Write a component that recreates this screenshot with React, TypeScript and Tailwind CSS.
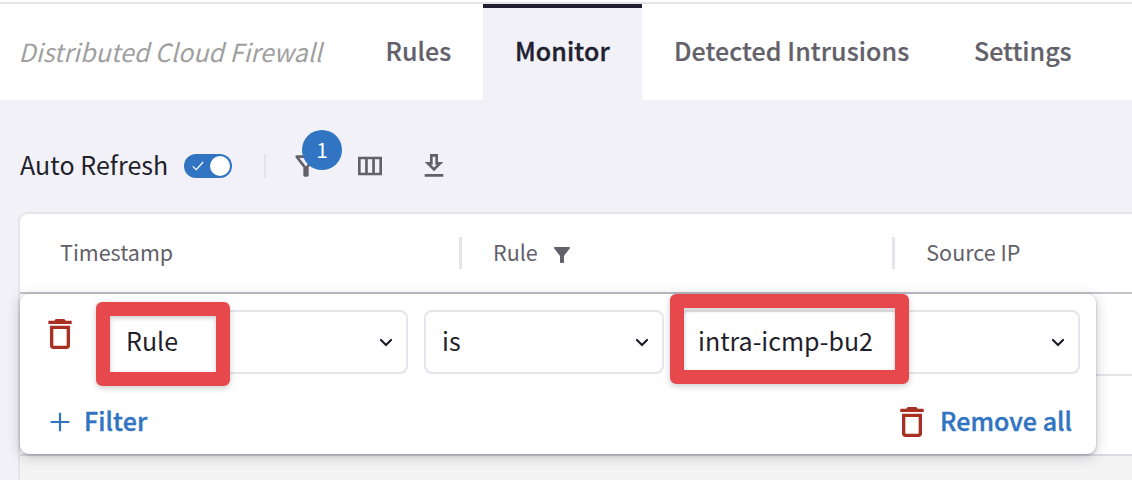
import React from "react";

function Trash() {
  return (
    <svg viewBox="0 0 24 24" className="size-10 shrink-0 fill-[#a92f23]">
      <path d="M16 9v10H8V9h8m-1.5-6h-5l-1 1H5v2h14V4h-3.500l-1-1zM18 7H6v12c0 1.100.9 2 2 2h8c1.100 0 2-.9 2-2V7z" />
    </svg>
  );
}

function Chevron() {
  return (
    <svg viewBox="0 0 24 24" className="size-6 shrink-0 fill-none stroke-[#1f1f2b] stroke-[2.2]">
      <path d="M7 10l5 5 5-5" strokeLinecap="round" strokeLinejoin="miter" />
    </svg>
  );
}

function Select({ label, className }: { label: string; className: string }) {
  return (
    <div className={`flex h-16 items-center justify-between rounded-lg border-2 border-[#e5e4ea] bg-white pr-2 ${className}`}>
      <span className="pb-1">{label}</span>
      <Chevron />
    </div>
  );
}

const FILTER =
  "M4.25 5.61C6.27 8.2 10 13 10 13v6c0 .55.45 1 1 1h2c.55 0 1-.45 1-1v-6s3.720-4.800 5.740-7.390C20.250 4.950 19.780 4 18.950 4H5.040c-.83 0-1.300.950-.79 1.610z";

export default function App() {
  return (
    <div className="h-[480px] w-[1132px] overflow-hidden bg-[#f2f1f7] font-['Noto_Sans_CJK_SC',sans-serif] text-[25px] leading-8 whitespace-nowrap text-[#1f1f2b]">
      <header className="h-[100px] bg-white pt-0.5">
        <div className="flex h-[98px] border-t-2 border-[#e5e4ea] font-medium text-[#62616a]">
          <div className="w-[353px] pt-[31px] pl-[18.500px] font-normal text-[#9f9f9f] italic">
            <span className="tracking-[0.04px]">Distributed Cloud Firewall</span>
          </div>
          <div className="w-[130px] pt-[30px] pl-[32.500px]">
            <span className="tracking-[0.05px] [-webkit-text-stroke:0.2px]">Rules</span>
          </div>
          <div className="w-[159px] border-t-4 border-[#211f30] bg-[#f2f1f7] pt-[26px] pl-8 text-[#211f30]">
            <span className="tracking-[0.1px] [-webkit-text-stroke:0.4px]">Monitor</span>
          </div>
          <div className="w-[300px] pt-[30px] pl-8">
            <span className="tracking-[0.08px] [-webkit-text-stroke:0.2px]">Detected Intrusions</span>
          </div>
          <div className="pt-[30px] pl-8">
            <span className="[-webkit-text-stroke:0.2px]">Settings</span>
          </div>
        </div>
      </header>

      <div className="flex h-28 items-center pt-5 pl-5">
        <div className="w-[164px] pb-1">
          <span className="tracking-[0.05px]">Auto Refresh</span>
        </div>
        <div className="flex h-6 w-12 items-center justify-between rounded-full bg-[#3174c2] pr-0.5 pl-2">
          <svg viewBox="0 0 12 10" className="h-2.5 w-3 fill-none stroke-white">
            <path d="M.8 5.300L4.200 8.700 11.200 1" strokeWidth="1.200" />
          </svg>
          <div className="size-5 rounded-full bg-white" />
        </div>
        <div className="ml-8 h-6 w-0.5 bg-[#e5e4ea]" />
        <div className="relative ml-6 size-8">
          <svg viewBox="0 0 24 24" className="size-8 fill-[#62616a]">
            <path d="M7 6h10l-5.010 6.300L7 6zm-2.750-.39C6.270 8.200 10 13 10 13v6c0 .55.45 1 1 1h2c.55 0 1-.45 1-1v-6s3.720-4.800 5.740-7.390c.51-.66.04-1.610-.79-1.610H5.040c-.83 0-1.300.950-.79 1.610z" />
          </svg>
          <span className="absolute -top-5 left-3 flex size-10 items-center justify-center rounded-full bg-[#3174c2] pb-0.5 text-[21px] text-white">
            1
          </span>
        </div>
        <svg viewBox="0 0 24 24" className="ml-8 size-8 fill-[#62616a]">
          <path d="M3 5v14h18V5H3zm5.330 12H5V7h3.330v10zm5.340 0h-3.330V7h3.330v10zM19 17h-3.330V7H19v10z" />
        </svg>
        <svg viewBox="0 0 24 24" className="ml-8 size-8 fill-[#62616a]">
          <path d="M19 9h-4V3H9v6H5l7 7 7-7zm-8 2V5h2v6h1.170L12 13.170 9.830 11H11zm-6 7h14v2H5z" />
        </svg>
      </div>

      <main className="relative ml-[18px] h-[268px] rounded-tl-[10px] border-t-2 border-l-2 border-[#e5e4ea] bg-white">
        <div className="flex h-20 items-center border-b-2 border-[#c4c3cb] text-[21.500px] text-[#62616a]">
          <div className="w-[439px] pb-0.5 pl-10">
            <span>Timestamp</span>
          </div>
          <div className="flex h-8 w-[433px] items-center border-l-[3px] border-[#e5e4ea] pl-[31px]">
            <span className="w-[57px] pb-0.5">Rule</span>
            <svg viewBox="0 0 24 24" className="mt-1 size-6 fill-[#62616a]">
              <path d={FILTER} />
            </svg>
          </div>
          <div className="flex h-8 items-center border-l-[3px] border-[#e5e4ea] pl-[31.300px]">
            <span className="pb-0.5">Source IP</span>
          </div>
        </div>
        <div className="h-[82px] border-b-2 border-[#e5e4ea]" />
        <div className="h-20 border-b-2 border-[#dcdbe3]" />
        <div className="h-6 bg-[#f4f4f4]" />

        <section className="absolute top-20 left-0 h-40 w-[1076px] rounded-[9px] bg-white pt-4 shadow-[0_3px_14px_rgba(30,30,50,0.22),0_1px_3px_rgba(30,30,50,0.28)]">
          <div className="flex h-16 gap-4 pl-5">
            <div className="h-10 w-10 pt-1">
              <Trash />
            </div>
            <Select className="w-[312px] pl-7" label="Rule" />
            <Select className="w-60 pl-4" label="is" />
            <Select className="w-[400px] pl-4" label="intra-icmp-bu2" />
          </div>
          <div className="mt-7 flex h-10 items-center justify-between pr-6 pl-6 font-medium text-[#3174c2]">
            <div className="flex items-center">
              <svg viewBox="0 0 32 32" className="mr-2 size-8 fill-none stroke-[#3174c2] stroke-[2.2]">
                <path d="M6.700 16h18.600M16 6.700v18.600" />
              </svg>
              <span className="pb-1 tracking-[0.1px] [-webkit-text-stroke:0.4px]">Filter</span>
            </div>
            <div className="flex items-center gap-2">
              <Trash />
              <span className="w-[132px] pb-1 tracking-[0.05px] [-webkit-text-stroke:0.4px]">Remove all</span>
            </div>
          </div>
          <div className="absolute top-2 left-[75.500px] h-[84px] w-[134.500px] rounded-md border-14 border-[#e6484b] shadow-[0_2px_6px_rgba(0,0,0,0.2),inset_0_2px_5px_rgba(0,0,0,0.2)]" />
          <div className="absolute top-0 left-[650px] h-[90px] w-[239px] rounded-md border-14 border-[#e6484b] shadow-[0_2px_6px_rgba(0,0,0,0.2),inset_0_2px_5px_rgba(0,0,0,0.2)]" />
        </section>
      </main>
    </div>
  );
}
